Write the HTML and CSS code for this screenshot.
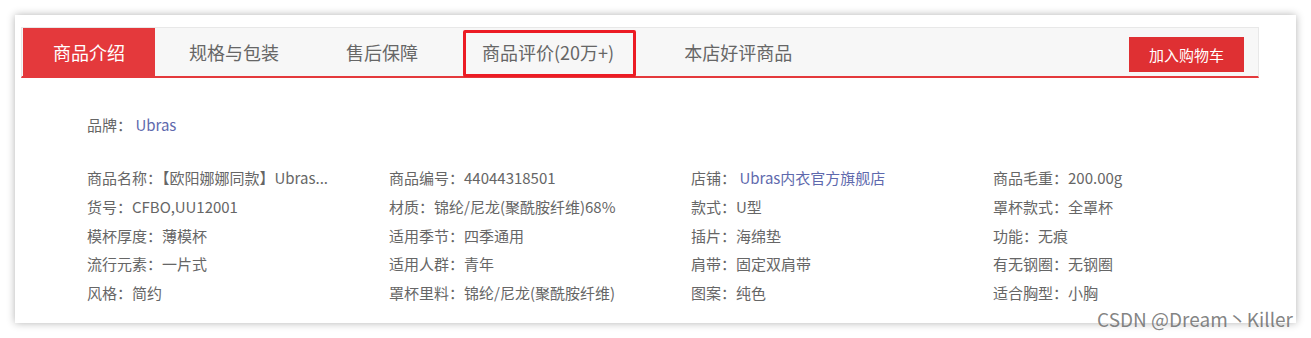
FILE: index.html
```html
<!DOCTYPE html>
<html lang="zh-CN">

<head>
    <meta charset="UTF-8">
    <meta name="viewport" content="width=device-width, initial-scale=1.0">
    <title>商品介绍</title>
    <link rel="stylesheet" href="styles.css">
</head>

<body>
    <div class="detail">
        <div class="tab-bar">
            <div class="tab active">商品介绍</div>
            <div class="tab">规格与包装</div>
            <div class="tab">售后保障</div>
            <div class="tab marked">商品评价(20万+)</div>
            <div class="tab">本店好评商品</div>
            <div class="add-cart-button">加入购物车</div>
        </div>

        <div class="props">
            <div class="brand">品牌： <a href="#">Ubras</a></div>
            <ul class="props-list">
                <li>商品名称：【欧阳娜娜同款】Ubras...</li>
                <li>商品编号：44044318501</li>
                <li>店铺： <a href="#">Ubras内衣官方旗舰店</a></li>
                <li>商品毛重：200.00g</li>
                <li>货号：CFBO,UU12001</li>
                <li>材质：锦纶/尼龙(聚酰胺纤维)68%</li>
                <li>款式：U型</li>
                <li>罩杯款式：全罩杯</li>
                <li>模杯厚度：薄模杯</li>
                <li>适用季节：四季通用</li>
                <li>插片：海绵垫</li>
                <li>功能：无痕</li>
                <li>流行元素：一片式</li>
                <li>适用人群：青年</li>
                <li>肩带：固定双肩带</li>
                <li>有无钢圈：无钢圈</li>
                <li>风格：简约</li>
                <li>罩杯里料：锦纶/尼龙(聚酰胺纤维)</li>
                <li>图案：纯色</li>
                <li>适合胸型：小胸</li>
            </ul>
        </div>

        <div class="watermark">CSDN @Dream丶Killer</div>
    </div>
</body>

</html>
```

FILE: styles.css
```css
body {
    font-family: "Noto Sans CJK SC", "Noto Sans", sans-serif;
    margin: 0;
    padding: 15px;
    background-color: #fff;
}

.detail {
    position: relative;
    width: 1281px;
    height: 308px;
    box-sizing: border-box;
    padding: 12px 37px 0 6px;
    background-color: #fff;
    box-shadow: 0 0 8px rgba(0, 0, 0, 0.3);
}

.tab-bar {
    display: flex;
    height: 48px;
    padding-left: 1px;
    background-color: #f7f7f7;
    border: 1px solid #e8e8e8;
    border-bottom: 2px solid #e4393c;
}

.tab {
    height: 48px;
    line-height: 48px;
    padding: 0 33px 0 34px;
    font-size: 18px;
    color: #666;
    white-space: nowrap;
}

.tab.active {
    width: 132px;
    padding: 0;
    text-align: center;
    background-color: #e4393c;
    color: #fff;
}

.tab.marked {
    position: relative;
    padding: 0 36px 0 31px;
}

/* 标注框 */
.tab.marked::after {
    content: "";
    position: absolute;
    left: 12px;
    right: 14px;
    top: 2px;
    bottom: -1px;
    border: 3px solid #ec1c24;
    border-radius: 2px;
}

.add-cart-button {
    margin: 9px 14px 0 auto;
    width: 115px;
    height: 35px;
    line-height: 35px;
    text-align: center;
    background-color: #df3033;
    color: #fff;
    font-size: 15px;
}

.props {
    padding-left: 66px;
    font-size: 15px;
    color: #666;
}

.props a {
    color: #5e69ad;
    text-decoration: none;
}

.brand {
    margin-top: 32px;
    line-height: 29px;
}

.props-list {
    display: grid;
    grid-template-columns: repeat(4, 302px);
    margin: 25px 0 0;
    padding: 0;
    list-style-type: none;
}

.props-list li {
    line-height: 28.75px;
    white-space: nowrap;
}

.watermark {
    position: absolute;
    right: 3px;
    top: 292px;
    font-size: 19px;
    line-height: 24px;
    color: rgba(110, 110, 110, 0.85);
    white-space: nowrap;
}
```
